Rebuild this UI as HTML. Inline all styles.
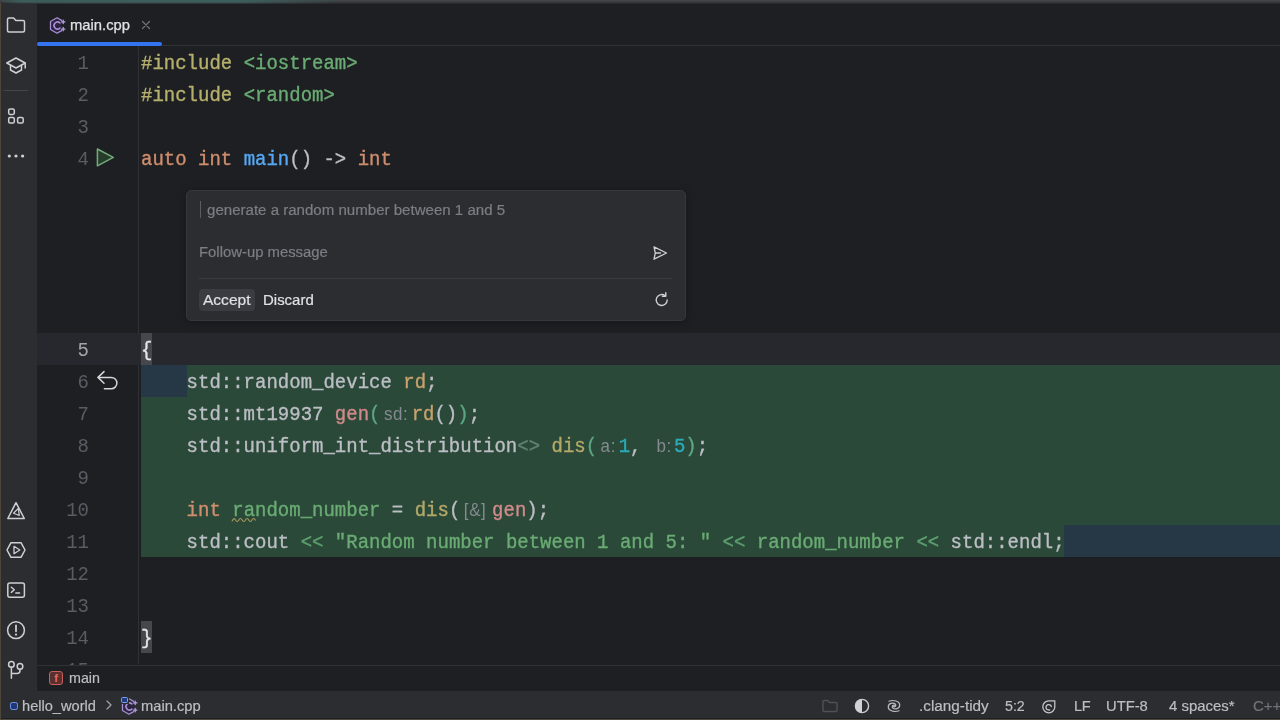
<!DOCTYPE html>
<html>
<head>
<meta charset="utf-8">
<style>
*{box-sizing:border-box;margin:0;padding:0}
html,body{width:1280px;height:720px;overflow:hidden;background:#1e1f22}
body{position:relative;font-family:"Liberation Sans",sans-serif;color:#bcbec4}
.abs{position:absolute}
#topstrip{left:0;top:0;width:1280px;height:4px;background:linear-gradient(180deg,#43474a 0,#3a3c3f 2px,#232428 4px)}
#topteal{left:0;top:0;width:340px;height:4px;background:linear-gradient(90deg,rgba(60,95,92,0) 0,rgba(60,95,92,0.9) 20px,rgba(60,98,95,0.9) 240px,rgba(60,95,92,0) 340px);-webkit-mask-image:linear-gradient(180deg,#000 0,#000 2px,transparent 4px)}
#leftedge{left:0;top:3px;width:1.300px;height:717px;background:#4d4538}
#sidebar{left:1px;top:4px;width:36px;height:714px;background:#2b2d30}
#editor{left:37px;top:3px;width:1243px;height:662px;background:#1e1f22}
#tabline{left:37px;top:45px;width:1243px;height:1px;background:#303236}
#tabul{left:37px;top:41.700px;width:125px;height:4.500px;background:#3574f0;border-radius:2px}
#gutline{left:138px;top:46px;width:1px;height:618px;background:#2f3134}
.ln{transform:scaleY(1.030);transform-origin:0 0;will-change:transform;position:absolute;left:37.500px;width:51px;padding-top:1.100px;text-align:right;font-family:"Liberation Mono",monospace;font-size:19px;line-height:32px;height:32px;color:#595c63}
.cl{transform:scaleY(1.030);transform-origin:0 0;will-change:transform;-webkit-text-stroke:0.35px currentColor;position:absolute;left:141px;white-space:pre;padding-top:1.100px;font-family:"Liberation Mono",monospace;font-size:19px;line-height:32px;height:32px;color:#bcbec4}
.hint{-webkit-text-stroke:0;display:inline-block;font-family:"Liberation Sans",sans-serif;font-size:17px;letter-spacing:0.6px;color:#868a91;padding-left:3.5px;line-height:20px;vertical-align:baseline;overflow:visible}
.op{color:#5d9f6e}.pp{color:#b5b06c}.st{color:#6aab73}.kw{color:#cf8e6d}.fn{color:#56a8f5}.nm{color:#2aacb8}
.v1{color:#c9a26d}.v2{color:#d08a8a}.v3{color:#b5a96a}.v4{color:#6aab73}.pg{color:#5da684}.dim{color:#628270}
#curline{left:37px;top:333px;width:1243px;height:32px;background:#26282e}
#green{left:141px;top:365px;width:1139px;height:192px;background:#2a4939}
#sel1{left:141px;top:365px;width:46px;height:32px;background:#263845}
#sel2{left:1064px;top:525px;width:216px;height:32px;background:#263845}
.brace{background:#43454a}
#popup{left:186px;top:190px;width:500px;height:131px;background:#2b2d30;border:1px solid #35373b;border-radius:5px;box-shadow:0 1px 8px rgba(0,0,0,0.28)}
#crumbs{left:37px;top:665px;width:1243px;height:26px;background:#1e1f22;border-top:1px solid #2f3134}
#status{left:0;top:691px;width:1280px;height:27px;background:#2b2d30}
#botstrip{left:0;top:718.500px;width:1280px;height:2px;background:#4f483d}
.ui{will-change:transform;-webkit-text-stroke:0.200px currentColor;position:absolute;font-size:15px;line-height:20px;white-space:pre}
</style>
</head>
<body>
<div id="editor" class="abs"></div>
<div id="tabline" class="abs"></div>
<div id="tabul" class="abs"></div>
<div id="gutline" class="abs"></div>
<div id="curline" class="abs"></div>
<div id="green" class="abs"></div>
<div id="sel1" class="abs"></div>
<div id="sel2" class="abs"></div>
<div class="abs" style="left:141px;top:333.300px;width:11.400px;height:31.500px;background:#45474c"></div>
<div class="abs" style="left:141px;top:621.300px;width:11.400px;height:31.500px;background:#45474c"></div>
<svg class="abs" style="left:231px;top:515px" width="26" height="8" viewBox="0 0 26 8" fill="none" stroke="#a8985f" stroke-width="1.200" stroke-linecap="round"><path d="M1.200 6 q1.650 -4 3.300 -1 t3.300 0 t3.300 0 t3.300 0 t3.300 0 t3.300 0 t3.300 0"/></svg>

<!-- line numbers -->
<div class="ln" style="top:46px">1</div>
<div class="ln" style="top:78px">2</div>
<div class="ln" style="top:110px">3</div>
<div class="ln" style="top:142px">4</div>
<div class="ln" style="top:333px;color:#a1a3ab">5</div>
<div class="ln" style="top:365px">6</div>
<div class="ln" style="top:397px">7</div>
<div class="ln" style="top:429px">8</div>
<div class="ln" style="top:461px">9</div>
<div class="ln" style="top:493px">10</div>
<div class="ln" style="top:525px">11</div>
<div class="ln" style="top:557px">12</div>
<div class="ln" style="top:589px">13</div>
<div class="ln" style="top:621px">14</div>
<div class="ln" style="top:653px">15</div>

<!-- code -->
<div class="cl" style="top:46px"><span class="pp">#include</span> <span class="st">&lt;iostream&gt;</span></div>
<div class="cl" style="top:78px"><span class="pp">#include</span> <span class="st">&lt;random&gt;</span></div>
<div class="cl" style="top:142px"><span class="kw">auto</span> <span class="kw">int</span> <span class="fn">main</span>() -&gt; <span class="kw">int</span></div>
<div class="cl" style="top:333px;color:#e3e5e9">{</div>
<div class="cl" style="top:365px">    std::random_device <span class="v1">rd</span>;</div>
<div class="cl" style="top:397px">    std::mt19937 <span class="v2">gen</span><span class="pg">(</span><span class="hint" style="width:31.2px">sd:</span><span class="v1">rd</span>()<span class="pg">)</span>;</div>
<div class="cl" style="top:429px">    std::uniform_int_distribution<span class="dim">&lt;&gt;</span> <span class="v3">dis</span><span class="pg">(</span><span class="hint" style="width:21.6px">a:</span><span class="nm">1</span>, <span class="hint" style="width:21px">b:</span><span class="nm">5</span><span class="pg">)</span>;</div>
<div class="cl" style="top:493px">    <span class="kw">int</span> <span class="v4">random_number</span> = <span class="v3">dis</span>(<span class="hint" style="width:31.8px">[&amp;]</span><span class="v2">gen</span>);</div>
<div class="cl" style="top:525px">    std::cout <span class="op">&lt;&lt;</span> <span class="st">"Random number between 1 and 5: "</span> <span class="op">&lt;&lt;</span> <span class="v4">random_number</span> <span class="op">&lt;&lt;</span> std::endl;</div>
<div class="cl" style="top:621px;color:#e3e5e9">}</div>

<!-- popup -->
<div id="popup" class="abs"></div>
<div class="abs" style="left:199.500px;top:201px;width:1.600px;height:17px;background:#5a5d63"></div>
<div class="ui" id="p1" style="left:207.3px;top:200px;color:#7b7e85;font-size:15.07px">generate a random number between 1 and 5</div>
<div class="ui" id="p2" style="left:199.3px;top:242px;color:#7b7e85;font-size:14.87px">Follow-up message</div>
<svg class="abs" style="left:651px;top:244px" width="18" height="18" viewBox="0 0 18 18" fill="none" stroke="#ced0d6" stroke-width="1.300" stroke-linejoin="round" stroke-linecap="round"><path d="M3 2.800 L15.500 9 L3 15.200 L4.300 9 Z M4.300 9 H9.500"/></svg>
<div class="abs" style="left:199px;top:278px;width:473px;height:1px;background:#393b40"></div>
<div class="abs" style="left:199px;top:289px;width:56px;height:22px;background:#3a3c41;border-radius:4px"></div>
<div class="ui" id="p3" style="left:203px;top:290px;color:#dfe1e5;font-size:15.54px">Accept</div>
<div class="ui" id="p4" style="left:263.2px;top:290px;color:#dfe1e5;font-size:14.98px">Discard</div>
<svg class="abs" style="left:653px;top:291px" width="18" height="18" viewBox="0 0 18 18" fill="none" stroke="#ced0d6" stroke-width="1.400" stroke-linecap="round" stroke-linejoin="round"><path d="M14.200 9 a5.500 5.500 0 1 1 -2 -4.300"/><path d="M12.800 1.800 V5.200 H9.400"/></svg>

<!-- tab -->
<svg class="abs" style="left:48.5px;top:16.5px" width="18" height="17" viewBox="0 0 18 17" fill="none" stroke="#a88fd6" stroke-width="1.3" stroke-linecap="round" stroke-linejoin="round">
  <path d="M12.6 3.4 L8 0.8 L1.5 4.5 V12.5 L8 16.2 L12.6 13.600" fill="#2b2340"/>
  <path d="M10.9 5.900 A3.500 3.500 0 1 0 10.900 11.100" stroke-width="1.600"/>
  <path d="M14.200 3.200 v3.400 M12.500 4.900 h3.400 M14.200 10.400 v3.400 M12.500 12.100 h3.400" stroke-width="1.300" stroke="#b9a0e4"/>
</svg>
<div class="ui" id="tabtxt" style="-webkit-text-stroke:0.25px currentColor;left:70px;top:15px;color:#dfe1e5;font-size:14.79px">main.cpp</div>
<svg class="abs" style="left:141px;top:20px" width="10" height="10" viewBox="0 0 10 10" stroke="#6f737a" stroke-width="1.200" stroke-linecap="round"><path d="M1.500 1.500 L8.500 8.500 M8.500 1.500 L1.500 8.500"/></svg>
<!-- run gutter -->
<svg class="abs" style="left:95.400px;top:146px" width="22" height="23" viewBox="0 0 22 23"><path d="M2.400 3 L18.300 11.400 L2.400 19.800 Z" fill="#263d2b" stroke="#73ab7a" stroke-width="1.500" stroke-linejoin="round"/></svg>
<!-- revert gutter -->
<svg class="abs" style="left:96px;top:370px" width="24" height="22" viewBox="0 0 24 22" fill="none" stroke="#d4d6db" stroke-width="1.500" stroke-linecap="round" stroke-linejoin="round"><path d="M8 1.600 L2 7.400 L8 13.200"/><path d="M2.300 7.400 H15.200 a5.700 5.700 0 0 1 0 11.400 H8.400"/></svg>


<div id="crumbs" class="abs"></div>
<div id="status" class="abs"></div>
<div id="sidebar" class="abs"></div>
<!-- sidebar icons -->
<svg class="abs" style="left:0;top:0" width="37" height="720" viewBox="0 0 37 720" fill="none" stroke="#ced0d6" stroke-width="1.5" stroke-linejoin="round" stroke-linecap="round">
  <!-- folder -->
  <path d="M7.5 19.5 a1.5 1.5 0 0 1 1.5 -1.5 h4.6 l2.3 2.5 h7.1 a1.5 1.5 0 0 1 1.5 1.5 v8.5 a1.5 1.5 0 0 1 -1.5 1.5 h-14 a1.5 1.5 0 0 1 -1.5 -1.5 z"/>
  <!-- learn cap -->
  <path d="M6.8 63 L16 58 L25.2 63 L16 68 Z"/>
  <path d="M10.5 65.5 v4.5 L16 73 l5.500 -3 v-4.5"/>
  <path d="M25.2 63 v5"/>
  <!-- separator -->
  <path d="M4 90.5 H28" stroke="#43454a" stroke-width="1"/>
  <!-- structure -->
  <rect x="8.7" y="108.9" width="5.6" height="5.6" rx="1.4"/>
  <rect x="8.7" y="117.5" width="5.6" height="5.6" rx="1.4"/>
  <rect x="17.6" y="117.5" width="5.6" height="5.6" rx="1.4"/>
  <!-- dots -->
  <g fill="#ced0d6" stroke="none"><circle cx="9.3" cy="156" r="1.6"/><circle cx="16" cy="156" r="1.6"/><circle cx="22.6" cy="156" r="1.6"/></g>
  <!-- cmake triangle -->
  <path d="M16 502.7 L24.3 518.5 H7.8 Z"/>
  <path d="M18.3 508.5 L13.5 513.2 L19.3 515.5 Z" stroke-width="1.2"/>
  <!-- services hexagon -->
  <path d="M11 542.7 H21 L25 550 L21 557.3 H11 L7 550 Z"/>
  <path d="M14 546.3 L19.8 550 L14 553.7 Z" stroke-width="1.3"/>
  <!-- terminal -->
  <rect x="7.8" y="583" width="16.6" height="14.2" rx="2"/>
  <path d="M11.3 587.2 L14.3 589.8 L11.3 592.4 M15.8 593 H19.6" stroke-width="1.4"/>
  <!-- problems -->
  <circle cx="16" cy="630.2" r="8.4"/>
  <path d="M16 625.5 V631.3" stroke-width="1.8"/>
  <circle cx="16" cy="634.6" r="1.1" fill="#ced0d6" stroke="none"/>
  <!-- git -->
  <circle cx="11.400" cy="664.400" r="2.800"/>
  <circle cx="20" cy="666.400" r="2.800"/>
  <path d="M11.400 667.300 V678.200 M20 669.300 V670.600 a3 3 0 0 1 -3 3 H11.400"/>
</svg>

<div class="abs" style="left:49px;top:671px;width:14px;height:14px;border:1.200px solid #c5605a;border-radius:3px;background:#5a2f2f"></div>
<div class="abs" style="left:49px;top:671px;width:14px;height:14px;color:#e06c66;font-size:11px;line-height:14px;text-align:center;font-weight:bold">f</div>
<div class="ui" id="c1" style="left:69px;top:668px;color:#bcbec4;font-size:14.31px">main</div>

<div class="abs" style="left:9.800px;top:701.800px;width:8.400px;height:8.400px;border:1.400px solid #6f93e6;border-radius:2.200px;background:#1f3873"></div>
<div class="ui" id="s1" style="left:22px;top:696px;color:#bcbec4;font-size:14.62px">hello_world</div>
<svg class="abs" style="left:103.500px;top:699.200px" width="10" height="12" viewBox="0 0 10 12" fill="none" stroke="#9da0a8" stroke-width="1.300" stroke-linecap="round" stroke-linejoin="round"><path d="M3 2 L7 6 L3 10"/></svg>
<svg class="abs" style="left:120.500px;top:697.500px" width="18" height="17" viewBox="0 0 18 17" fill="none" stroke="#a88fd6" stroke-width="1.3" stroke-linecap="round" stroke-linejoin="round">
  <path d="M12.6 3.4 L8 0.8 L1.5 4.5 V12.5 L8 16.2 L12.6 13.600" fill="#2b2340"/>
  <path d="M10.9 5.900 A3.500 3.500 0 1 0 10.900 11.100" stroke-width="1.600"/>
  <path d="M14.200 3.200 v3.400 M12.500 4.900 h3.400 M14.200 10.400 v3.400 M12.500 12.100 h3.400" stroke-width="1.300" stroke="#b9a0e4"/>
</svg>
<div class="abs" style="left:120px;top:696px;width:8.500px;height:8px;background:#2b2d30"></div><div class="abs" style="left:120.700px;top:696.700px;width:7.300px;height:6.800px;border:1.300px solid #7aa2ef;border-radius:1.500px;background:#1f3a80"></div>
<div class="ui" id="s2" style="left:141.3px;top:696px;color:#bcbec4;font-size:14.71px">main.cpp</div>
<svg class="abs" style="left:821px;top:698px" width="18" height="16" viewBox="0 0 18 16" fill="none" stroke="#4e5157" stroke-width="1.400" stroke-linejoin="round"><path d="M2 3.500 a1 1 0 0 1 1 -1 h3.600 l1.800 2 h6.600 a1 1 0 0 1 1 1 v7 a1 1 0 0 1 -1 1 h-12 a1 1 0 0 1 -1 -1 z"/></svg>
<svg class="abs" style="left:853px;top:697px" width="18" height="18" viewBox="0 0 18 18"><circle cx="9" cy="9" r="6.600" fill="none" stroke="#c9cbd0" stroke-width="1.400"/><path d="M9 2.400 A6.600 6.600 0 0 0 9 15.600 Z" fill="#d0d2d6"/></svg>
<svg class="abs" style="left:885.100px;top:697px" width="18" height="18" viewBox="-9 -9 18 18" fill="none" stroke="#b8babf" stroke-width="1.300" stroke-linecap="round"><g id="arm" transform="scale(1,0.900)"><path d="M-5 -5.300 C-1 -7 5.800 -5.800 5.700 -0.800 C5.600 3 1 4.200 -1.200 2.300 C-2.700 0.800 -1 -1.600 0.900 -0.700"/></g><use href="#arm" transform="rotate(180)"/></svg>
<div class="ui" id="s3" style="left:918.5px;top:696px;color:#bcbec4;font-size:15.31px">.clang-tidy</div>
<div class="ui" id="s4" style="left:1005.3px;top:696px;color:#bcbec4;font-size:14.24px">5:2</div>
<svg class="abs" style="left:1040.300px;top:697.800px" width="18" height="18" viewBox="0 0 18 18" fill="none" stroke="#c3c5ca" stroke-width="1.300" stroke-linecap="round" stroke-linejoin="round"><path d="M14.800 2.800 H8.800 a6 6 0 1 0 6 6 Z"/><path d="M11.300 8.500 a2.700 2.700 0 1 0 -1.600 3.300"/></svg>
<div class="ui" id="s5" style="left:1073.8px;top:696px;color:#bcbec4;font-size:14.600px;letter-spacing:-0.450px">LF</div>
<div class="ui" id="s6" style="left:1106.2px;top:696px;color:#bcbec4;font-size:14.75px">UTF-8</div>
<div class="ui" id="s7" style="left:1169.3px;top:696px;color:#bcbec4;font-size:14.94px">4 spaces*</div>
<div class="ui" id="s8" style="left:1252.5px;top:696px;color:#6f737a;font-size:15.02px">C++</div>

<div id="topstrip" class="abs"></div><div id="topteal" class="abs"></div>
<div id="leftedge" class="abs"></div>
<div id="botstrip" class="abs"></div>
</body>
</html>
